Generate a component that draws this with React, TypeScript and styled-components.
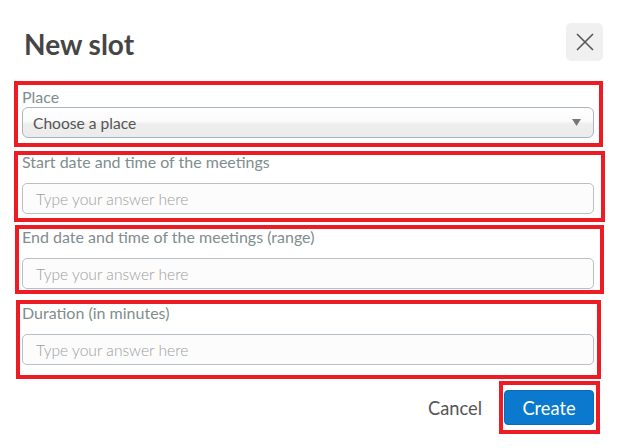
import React from "react";
import styled, { createGlobalStyle } from "styled-components";

const GlobalStyle = createGlobalStyle`
  html, body { margin: 0; padding: 0; background: #ffffff; }
  body { font-family: Lato, "Open Sans", "Liberation Sans", sans-serif; }
  * { box-sizing: border-box; }
`;

const Dialog = styled.div`
  width: 618px;
  height: 448px;
  padding: 23px 24px 0 22px;
  background: #ffffff;
`;

const Header = styled.div`
  display: flex;
  justify-content: space-between;
  align-items: flex-start;
  padding-left: 2px;
  margin-right: -9px;
`;

const Title = styled.h1`
  margin: 4px 0 0;
  font: 700 28px/34px Lato, "Liberation Sans", sans-serif;
  color: #454545;
`;

const CloseButton = styled.button`
  width: 37px;
  height: 38px;
  border: none;
  border-radius: 5px;
  background: #f0f0f0;
  display: flex;
  align-items: center;
  justify-content: center;
  padding: 0;
`;

const Form = styled.div`
  display: flex;
  flex-direction: column;
  margin-top: 27px;
`;

type Inset = { $t: number; $r: number; $b: number; $l: number };

const Annotated = styled.div<Inset & { $mt?: number }>`
  position: relative;
  margin-top: ${(p) => p.$mt ?? 0}px;
  &::after {
    content: "";
    position: absolute;
    top: ${(p) => -p.$t}px;
    right: ${(p) => -p.$r}px;
    bottom: ${(p) => -p.$b}px;
    left: ${(p) => -p.$l}px;
    border: 4px solid #ed1c24;
    pointer-events: none;
  }
`;

const Label = styled.label<{ $gap: number }>`
  display: block;
  font: 400 16px/18px Lato, "Liberation Sans", sans-serif;
  color: #808d8e;
  margin-bottom: ${(p) => p.$gap}px;
`;

const SelectBox = styled.div`
  height: 31px;
  display: flex;
  align-items: center;
  justify-content: space-between;
  padding: 0 12px 0 10px;
  border: 1px solid #aab4bd;
  border-radius: 6px;
  background: linear-gradient(to bottom, #ffffff 0%, #fbfbfb 45%, #eeeeee 55%, #ececec 100%);
  font: 400 15.6px Lato, "Liberation Sans", sans-serif;
  color: #555555;
`;

const TextInput = styled.input`
  display: block;
  width: 100%;
  height: 31px;
  padding: 0 13px;
  border: 1px solid #b9c1c8;
  border-radius: 5px;
  background: #fcfcfc;
  font: 300 15.6px Lato, "Liberation Sans", sans-serif;
  color: #555555;
  outline: none;
  &::placeholder {
    color: #9d9d9d;
  }
`;

const Footer = styled.div`
  display: flex;
  justify-content: flex-end;
  align-items: center;
  gap: 22px;
  margin-top: 25px;
`;

const CancelButton = styled.button`
  border: none;
  background: none;
  padding: 0;
  font: 400 18.3px Lato, "Liberation Sans", sans-serif;
  color: #555555;
`;

const CreateButton = styled.button`
  width: 90px;
  height: 35px;
  border: 1px solid #0a6cb8;
  border-radius: 4px;
  background: #0b79cd;
  color: #ffffff;
  font: 400 18.3px Lato, "Liberation Sans", sans-serif;
  padding: 0;
`;

const fields = [
  { label: "Start date and time of the meetings", mt: 15, inset: { $t: 2, $r: 11, $b: 8, $l: 8 } },
  { label: "End date and time of the meetings (range)", mt: 14, inset: { $t: 3, $r: 10, $b: 5, $l: 7 } },
  { label: "Duration (in minutes)", mt: 15, inset: { $t: 4, $r: 7, $b: 14, $l: 6 } },
];

export default function App() {
  return (
    <>
      <GlobalStyle />
      <Dialog>
        <Header>
          <Title>New slot</Title>
          <CloseButton aria-label="Close">
            <svg width="18" height="18" viewBox="0 0 18 18">
              <path d="M1 1 L17 17 M17 1 L1 17" stroke="#555" strokeWidth="1.6" fill="none" />
            </svg>
          </CloseButton>
        </Header>
        <Form>
          <Annotated $t={7} $r={9} $b={9} $l={8}>
            <Label $gap={1}>Place</Label>
            <SelectBox>
              <span>Choose a place</span>
              <svg width="9" height="7" viewBox="0 0 9 7">
                <path d="M0 0 H9 L4.5 7 Z" fill="#777" />
              </svg>
            </SelectBox>
          </Annotated>
          {fields.map((f) => (
            <Annotated key={f.label} $mt={f.mt} {...f.inset}>
              <Label $gap={12}>{f.label}</Label>
              <TextInput placeholder="Type your answer here" />
            </Annotated>
          ))}
        </Form>
        <Footer>
          <CancelButton>Cancel</CancelButton>
          <Annotated $t={9} $r={6} $b={9} $l={5}>
            <CreateButton>Create</CreateButton>
          </Annotated>
        </Footer>
      </Dialog>
    </>
  );
}
